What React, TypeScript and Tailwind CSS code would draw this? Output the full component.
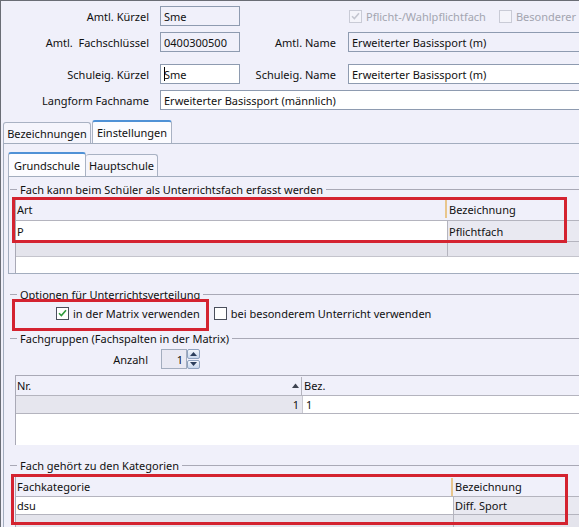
import type { ReactNode } from 'react';

const Field = ({ value, white = false, caret = false, className = '' }: { value: string; white?: boolean; caret?: boolean; className?: string }) => (
  <div
    className={`h-[20px] shrink-0 border border-[#8e9bb0] flex items-center pl-[3px] whitespace-nowrap overflow-hidden ${
      white ? 'bg-white' : 'bg-[#f0f0fa]'
    } ${className}`}
  >
    {caret && <span className="w-px h-[14px] bg-black -mr-px" />}
    {value}
  </div>
);

const Label = ({ children, className = 'w-[148px]' }: { children: ReactNode; className?: string }) => (
  <div className={`shrink-0 text-right whitespace-pre ${className}`}>{children}</div>
);

const GroupTitle = ({ title, className = '' }: { title: string; className?: string }) => (
  <div className={`flex items-center h-[16px] ${className}`}>
    <div className="w-[7px] h-px bg-[#a9a9b6] shrink-0" />
    <span className="px-[3px] whitespace-nowrap">{title}</span>
    <div className="flex-1 h-px bg-[#a9a9b6]" />
  </div>
);

const Check = ({ checked = false, disabled = false }: { checked?: boolean; disabled?: boolean }) => (
  <div
    className={`w-[13px] h-[13px] shrink-0 border flex items-center justify-center ${
      disabled ? 'border-[#c9cbd6] bg-[#f4f4fa]' : 'border-[#4a4f5c] bg-white'
    }`}
  >
    {checked && (
      <svg width="9" height="8" viewBox="0 0 9 8">
        <path
          d="M1 4.2 L3.4 6.6 L8 1.2"
          fill="none"
          stroke={disabled ? '#c4c6d0' : '#2f9a3c'}
          strokeWidth="1.6"
        />
      </svg>
    )}
  </div>
);

const RedBox = ({ className }: { className: string }) => (
  <div className={`absolute border-[3px] border-[#d42330] pointer-events-none ${className}`} />
);

const SortUp = () => (
  <svg width="7" height="5" viewBox="0 0 7 5" className="shrink-0">
    <path d="M0 5 L3.5 0.5 L7 5 Z" fill="#3d4350" />
  </svg>
);

export default function App() {
  return (
    <div className="w-[579px] h-[527px] overflow-hidden bg-[#f0f0fa] border-t border-l border-[#6a6d75] text-[11px] leading-none text-[#111] font-['Noto_Sans',sans-serif]">
      {/* Kopfdaten */}
      <div className="pt-[5px]">
        <div className="flex items-center h-[20px]">
          <Label>Amtl. Kürzel</Label>
          <Field value="Sme" className="ml-[11px] w-[80px]" />
          <div className="ml-[109px] flex items-center text-[#a3a5b0]">
            <Check checked disabled />
            <span className="ml-[4px] whitespace-nowrap">Pflicht-/Wahlpflichtfach</span>
            <div className="ml-[13px]">
              <Check disabled />
            </div>
            <span className="ml-[4px] whitespace-nowrap">Besonderer</span>
          </div>
        </div>
        <div className="flex items-center h-[20px] mt-[6px]">
          <Label>{'Amtl.  Fachschlüssel'}</Label>
          <Field value="0400300500" className="ml-[11px] w-[80px]" />
          <Label className="w-[96px]">Amtl. Name</Label>
          <Field value="Erweiterter Basissport (m)" className="ml-[12px] w-[260px]" />
        </div>
        <div className="flex items-center h-[20px] mt-[12px]">
          <Label>Schuleig. Kürzel</Label>
          <Field value="Sme" white caret className="ml-[11px] w-[80px]" />
          <Label className="w-[96px]">Schuleig. Name</Label>
          <Field value="Erweiterter Basissport (m)" white className="ml-[12px] w-[260px]" />
        </div>
        <div className="flex items-center h-[20px] mt-[6px]">
          <Label>Langform Fachname</Label>
          <Field value="Erweiterter Basissport (männlich)" white className="ml-[11px] w-[440px]" />
        </div>
      </div>

      {/* äußere Tabs */}
      <div className="flex items-end h-[23px] mt-[10px] pl-[2px]">
        <div className="h-[21px] w-[88px] border border-b-0 border-[#a9b2c3] rounded-t-[3px] bg-[#f5f5fc] flex items-center justify-center">
          Bezeichnungen
        </div>
        <div className="h-[23px] w-[80px] ml-[1px] border border-b-0 border-[#a9b2c3] border-t-2 border-t-[#4f91d6] rounded-t-[3px] bg-[#fcfcff] flex items-center justify-center">
          Einstellungen
        </div>
      </div>

      <div className="ml-[2px] border-t border-l border-[#a3adbe]">
        {/* innere Tabs */}
        <div className="flex items-end h-[24px] mt-[8px] pl-[4px]">
          <div className="h-[24px] w-[78px] border border-b-0 border-[#a9b2c3] border-t-2 border-t-[#4f91d6] rounded-t-[3px] bg-[#fcfcff] flex items-center justify-center">
            Grundschule
          </div>
          <div className="h-[22px] w-[72px] border border-b-0 border-l-0 border-[#a9b2c3] rounded-t-[3px] bg-[#f5f5fc] flex items-center justify-center">
            Hauptschule
          </div>
        </div>

        <div className="ml-[4px] border-t border-l border-b border-[#a3adbe]">
          <GroupTitle title="Fach kann beim Schüler als Unterrichtsfach erfasst werden" className="mt-[4px] ml-[1px]" />
          <div className="relative mt-[1px] ml-[6px] border-l border-[#a9a9b6]">
            <div className="flex items-center h-[23px] border-b border-[#b4b4be]">
              <div className="w-[429px] pl-[1px]">Art</div>
              <div className="w-[2px] h-[18px] bg-[#e8c68c]" />
              <div className="pl-[2px]">Bezeichnung</div>
            </div>
            <div className="flex h-[21px] border-b border-[#b4b4be]">
              <div className="w-[431px] bg-white flex items-center pl-[1px]">P</div>
              <div className="flex-1 bg-[#e9e9f1] border-l border-[#b4b4be] flex items-center pl-[1px]">Pflichtfach</div>
            </div>
            <div className="flex h-[15px] border-b border-[#c4c4cc] bg-[#e4e4ec]">
              <div className="w-[431px]" />
              <div className="flex-1 border-l border-[#b4b4be]" />
            </div>
            <div className="h-[16px] bg-white" />
            <RedBox className="-left-[4px] -top-[1px] w-[555px] h-[46px]" />
          </div>
        </div>

        <GroupTitle title="Optionen für Unterrichtsverteilung" className="mt-[12px] ml-[6px]" />
        <div className="relative flex items-center h-[20px] mt-[1px]">
          <div className="ml-[52px]">
            <Check checked />
          </div>
          <span className="ml-[4px] whitespace-nowrap">in der Matrix verwenden</span>
          <div className="ml-[14px]">
            <Check />
          </div>
          <span className="ml-[4px] whitespace-nowrap">bei besonderem Unterricht verwenden</span>
          <RedBox className="left-[8px] -top-[4px] w-[197px] h-[32px]" />
        </div>

        <GroupTitle title="Fachgruppen (Fachspalten in der Matrix)" className="mt-[7px] ml-[6px]" />
        <div className="flex items-center h-[20px] mt-[3px]">
          <Label className="w-[144px]">Anzahl</Label>
          <div className="ml-[13px] h-[20px] w-[26px] border border-[#a3adbe] bg-[#e9e9f3] flex items-center justify-end pr-[3px]">1</div>
          <div className="h-[20px] w-[13px] flex flex-col gap-px">
            <div className="flex-1 rounded-[2px] border border-[#8fa2bf] bg-gradient-to-b from-[#f2f6fc] to-[#c9d7ec] flex items-center justify-center">
              <svg width="7" height="4" viewBox="0 0 7 4">
                <path d="M0 4 L3.5 0 L7 4 Z" fill="#2c3e5c" />
              </svg>
            </div>
            <div className="flex-1 rounded-[2px] border border-[#8fa2bf] bg-gradient-to-b from-[#f2f6fc] to-[#c9d7ec] flex items-center justify-center">
              <svg width="7" height="4" viewBox="0 0 7 4">
                <path d="M0 0 L3.5 4 L7 0 Z" fill="#2c3e5c" />
              </svg>
            </div>
          </div>
        </div>

        <div className="mt-[6px] ml-[11px] border-l border-t border-[#a9a9b6]">
          <div className="flex items-center h-[20px] border-b border-[#b4b4be]">
            <div className="w-[285px] pl-[1px] flex items-center">
              <span>Nr.</span>
              <div className="flex-1" />
              <SortUp />
              <div className="w-[2px]" />
            </div>
            <div className="w-px h-[18px] bg-[#b4b4be]" />
            <div className="pl-[2px]">Bez.</div>
          </div>
          <div className="flex h-[18px] border-b border-[#b4b4be]">
            <div className="w-[286px] bg-[#e6e6ee] flex items-center justify-end pr-[3px]">1</div>
            <div className="flex-1 bg-white flex items-center pl-[3px] border-l border-[#c8c8d0]">1</div>
          </div>
          <div className="h-[31px] bg-white" />
        </div>

        <GroupTitle title="Fach gehört zu den Kategorien" className="mt-[12px] ml-[6px]" />
        <div className="relative mt-[4px] ml-[11px] border-l border-[#a9a9b6]">
          <div className="flex items-center h-[20px] border-b border-[#b4b4be]">
            <div className="w-[435px] pl-[1px]">Fachkategorie</div>
            <div className="w-[2px] h-[18px] bg-[#e8c68c]" />
            <div className="pl-[2px]">Bezeichnung</div>
          </div>
          <div className="flex h-[18px] border-b border-[#b4b4be]">
            <div className="w-[437px] bg-white flex items-center pl-[1px]">dsu</div>
            <div className="flex-1 bg-[#e9e9f1] border-l border-[#b4b4be] flex items-center pl-[1px]">Diff. Sport</div>
          </div>
          <div className="flex h-[15px] bg-[#e4e4ec]">
            <div className="w-[437px]" />
            <div className="flex-1 border-l border-[#b4b4be]" />
          </div>
          <RedBox className="-left-[5px] -top-[3px] w-[557px] h-[51px]" />
        </div>
      </div>
    </div>
  );
}
